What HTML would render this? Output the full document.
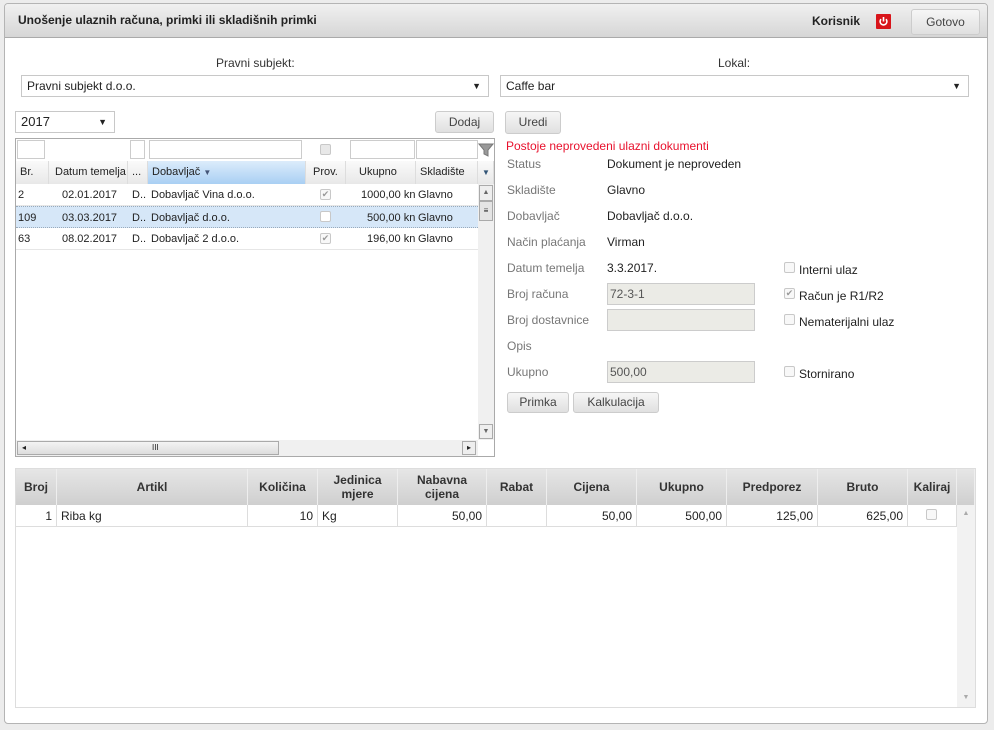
<!DOCTYPE html>
<html><head><meta charset="utf-8">
<style>
*{box-sizing:border-box;margin:0;padding:0}
body{width:994px;height:730px;background:#ececec;font-family:"Liberation Sans",Arial,sans-serif;font-size:12px;color:#222;position:relative;overflow:hidden}
.a{position:absolute}
.panel{left:4px;top:3px;width:984px;height:721px;background:#fff;border:1px solid #b4b4b4;border-radius:4px}
.hdr{left:5px;top:4px;width:982px;height:34px;background:linear-gradient(#f0f0f0,#d6d6d6);border-bottom:1px solid #aaa;border-radius:3px 3px 0 0}
.btn{position:absolute;background:linear-gradient(#f6f6f6,#e0e0e0);border:1px solid #ccc;border-radius:3px;text-align:center;color:#444;font-size:12px}
.sel{position:absolute;border:1px solid #c8c8c8;background:#fff;font-size:12px;padding-left:5px;line-height:20px}
.sel:after{content:"▼";position:absolute;right:7px;top:0;font-size:9px}
.lbl{position:absolute;color:#777;font-size:12px}
.val{position:absolute;color:#222;font-size:12px}
.inp{position:absolute;background:#ebebe6;border:1px solid #ccc;height:22px;width:148px;left:607px;color:#555;padding-left:2px;line-height:20px}
.cb{position:absolute;width:11px;height:11px;border:1px solid #c8c8c8;border-radius:2px;background:#f8f8f8;color:#999;font-size:9px;line-height:9px;text-align:center}
.gh{position:absolute;top:161px;height:23px;line-height:23px;background:linear-gradient(#fafafa,#e8e8e8);border-right:1px solid #ddd;font-size:11px;color:#222;padding-left:4px}
.fi{position:absolute;top:140px;height:19px;border:1px solid #ccc;background:#fff}
.row{position:absolute;left:16px;width:462px;height:22px;border-bottom:1px solid #e6e6e6;font-size:11px;line-height:22px}
.row span{position:absolute}
.bh{position:absolute;top:469px;height:36px;background:linear-gradient(#e6e6e6,#cfcfcf);border-right:1px solid #eee;font-weight:bold;font-size:12px;color:#333;text-align:center;display:flex;align-items:center;justify-content:center;line-height:14px}
.bc{position:absolute;top:505px;height:22px;border-right:1px solid #ddd;border-bottom:1px solid #ddd;line-height:22px;font-size:12px;padding:0 4px}
</style></head><body>
<div class="a panel"></div>
<div class="a hdr"></div>
<div class="a" style="left:18px;top:13px;font-weight:bold;font-size:12px;color:#222">Unošenje ulaznih računa, primki ili skladišnih primki</div>
<div class="a" style="left:812px;top:14px;font-weight:bold;font-size:12px">Korisnik</div>
<div class="a" style="left:876px;top:14px;width:15px;height:15px;background:#d8141a;border-radius:1px">
<svg width="15" height="15" viewBox="0 0 15 15"><path d="M5 5.2A3.4 3.4 0 1 0 10 5.2" fill="none" stroke="#fff" stroke-width="1.6"/><path d="M7.5 3v4.5" stroke="#fff" stroke-width="1.6"/></svg></div>
<div class="btn" style="left:911px;top:9px;width:69px;height:26px;line-height:24px;font-size:12px">Gotovo</div>

<div class="a" style="left:216px;top:56px;font-size:12px;color:#333">Pravni subjekt:</div>
<div class="sel" style="left:21px;top:75px;width:468px;height:22px">Pravni subjekt d.o.o.</div>
<div class="a" style="left:718px;top:56px;font-size:12px;color:#333">Lokal:</div>
<div class="sel" style="left:500px;top:75px;width:469px;height:22px">Caffe bar</div>

<div class="sel" style="left:15px;top:111px;width:100px;height:22px;font-size:13px">2017</div>
<div class="btn" style="left:435px;top:111px;width:59px;height:22px;line-height:20px">Dodaj</div>
<div class="btn" style="left:505px;top:111px;width:56px;height:23px;line-height:21px">Uredi</div>

<div class="a" style="left:15px;top:138px;width:480px;height:319px;border:1px solid #aaa;background:#fff"></div>
<div class="fi" style="left:17px;width:28px"></div>
<div class="fi" style="left:130px;width:15px"></div>
<div class="fi" style="left:149px;width:153px"></div>
<div class="cb" style="left:320px;top:144px;background:#e8e8e8"></div>
<div class="fi" style="left:350px;width:65px"></div>
<div class="fi" style="left:416px;width:62px"></div>
<svg class="a" style="left:478px;top:142px" width="16" height="16" viewBox="0 0 16 16"><path d="M1 2h14l-5 6v6l-4-2V8z" fill="#999" stroke="#777"/></svg>
<div class="gh" style="left:16px;width:33px">Br.</div>
<div class="gh" style="left:49px;width:79px;padding-left:6px">Datum temelja</div>
<div class="gh" style="left:128px;width:20px">...</div>
<div class="gh" style="left:148px;width:158px;background:linear-gradient(#dcecfb,#a9cff3)">Dobavljač <span style="font-size:8px;color:#457">▼</span></div>
<div class="gh" style="left:306px;width:40px;padding-left:7px">Prov.</div>
<div class="gh" style="left:346px;width:70px;padding-left:13px">Ukupno</div>
<div class="gh" style="left:416px;width:62px">Skladište</div>
<div class="gh" style="left:478px;width:16px;font-size:8px;color:#357;padding-left:4px">▼</div>

<div class="row" style="top:184px"><span style="left:2px">2</span><span style="left:46px">02.01.2017</span><span style="left:116px">D..</span><span style="left:135px">Dobavljač Vina d.o.o.</span><span style="left:304px;top:5px" class="cb">✔</span><span style="left:345px">1000,00 kn</span><span style="left:402px">Glavno</span></div>
<div class="row" style="top:206px;background:#d6e7f8;border-top:1px dotted #9ab;border-bottom:1px dotted #9ab"><span style="left:2px">109</span><span style="left:46px">03.03.2017</span><span style="left:116px">D..</span><span style="left:135px">Dobavljač d.o.o.</span><span style="left:304px;top:4px;background:#fff" class="cb"></span><span style="left:351px">500,00 kn</span><span style="left:402px">Glavno</span></div>
<div class="row" style="top:228px"><span style="left:2px">63</span><span style="left:46px">08.02.2017</span><span style="left:116px">D..</span><span style="left:135px">Dobavljač 2 d.o.o.</span><span style="left:304px;top:5px" class="cb">✔</span><span style="left:351px">196,00 kn</span><span style="left:402px">Glavno</span></div>
<div class="a" style="left:478px;top:184px;width:16px;height:256px;background:#f0f0f0"></div>
<div class="a" style="left:479px;top:185px;width:14px;height:16px;border:1px solid #aaa;background:#eee;font-size:7px;text-align:center;line-height:14px;color:#666">▲</div>
<div class="a" style="left:479px;top:201px;width:14px;height:20px;border:1px solid #aaa;background:#e4e4e4;font-size:8px;text-align:center;line-height:18px">≡</div>
<div class="a" style="left:479px;top:424px;width:14px;height:15px;border:1px solid #aaa;background:#eee;font-size:7px;text-align:center;line-height:13px;color:#666">▼</div>
<div class="a" style="left:16px;top:440px;width:462px;height:16px;background:#f0f0f0"></div>
<div class="a" style="left:17px;top:441px;width:262px;height:14px;border:1px solid #aaa;background:linear-gradient(#f4f4f4,#ddd);font-size:8px;line-height:12px;padding-left:4px">◂<span style="position:absolute;left:134px">III</span></div>
<div class="a" style="left:462px;top:441px;width:14px;height:14px;border:1px solid #aaa;background:#eee;font-size:8px;line-height:12px;text-align:center">▸</div>

<div class="a" style="left:506px;top:139px;color:#e8112d;font-size:12px">Postoje neprovedeni ulazni dokumenti</div>
<div class="lbl" style="left:507px;top:157px">Status</div><div class="val" style="left:607px;top:157px">Dokument je neproveden</div>
<div class="lbl" style="left:507px;top:183px">Skladište</div><div class="val" style="left:607px;top:183px">Glavno</div>
<div class="lbl" style="left:507px;top:209px">Dobavljač</div><div class="val" style="left:607px;top:209px">Dobavljač d.o.o.</div>
<div class="lbl" style="left:507px;top:235px">Način plaćanja</div><div class="val" style="left:607px;top:235px">Virman</div>
<div class="lbl" style="left:507px;top:261px">Datum temelja</div><div class="val" style="left:607px;top:261px">3.3.2017.</div>
<div class="lbl" style="left:507px;top:287px">Broj računa</div><div class="inp" style="top:283px">72-3-1</div>
<div class="lbl" style="left:507px;top:313px">Broj dostavnice</div><div class="inp" style="top:309px"></div>
<div class="lbl" style="left:507px;top:339px">Opis</div>
<div class="lbl" style="left:507px;top:365px">Ukupno</div><div class="inp" style="top:361px">500,00</div>
<div class="cb" style="left:784px;top:262px"></div><div class="val" style="left:799px;top:263px">Interni ulaz</div>
<div class="cb" style="left:784px;top:288px">✔</div><div class="val" style="left:799px;top:289px">Račun je R1/R2</div>
<div class="cb" style="left:784px;top:314px"></div><div class="val" style="left:799px;top:315px">Nematerijalni ulaz</div>
<div class="cb" style="left:784px;top:366px"></div><div class="val" style="left:799px;top:367px">Stornirano</div>
<div class="btn" style="left:507px;top:392px;width:62px;height:21px;line-height:19px">Primka</div>
<div class="btn" style="left:573px;top:392px;width:86px;height:21px;line-height:19px">Kalkulacija</div>

<div class="a" style="left:15px;top:468px;width:961px;height:240px;border:1px solid #ddd;background:#fff"></div>
<div class="bh" style="left:16px;width:41px">Broj</div>
<div class="bh" style="left:57px;width:191px">Artikl</div>
<div class="bh" style="left:248px;width:70px">Količina</div>
<div class="bh" style="left:318px;width:80px">Jedinica<br>mjere</div>
<div class="bh" style="left:398px;width:89px">Nabavna<br>cijena</div>
<div class="bh" style="left:487px;width:60px">Rabat</div>
<div class="bh" style="left:547px;width:90px">Cijena</div>
<div class="bh" style="left:637px;width:90px">Ukupno</div>
<div class="bh" style="left:727px;width:91px">Predporez</div>
<div class="bh" style="left:818px;width:90px">Bruto</div>
<div class="bh" style="left:908px;width:49px">Kaliraj</div>
<div class="bh" style="left:957px;width:18px"></div>
<div class="bc" style="left:16px;width:41px;text-align:right">1</div>
<div class="bc" style="left:57px;width:191px">Riba kg</div>
<div class="bc" style="left:248px;width:70px;text-align:right">10</div>
<div class="bc" style="left:318px;width:80px">Kg</div>
<div class="bc" style="left:398px;width:89px;text-align:right">50,00</div>
<div class="bc" style="left:487px;width:60px"></div>
<div class="bc" style="left:547px;width:90px;text-align:right">50,00</div>
<div class="bc" style="left:637px;width:90px;text-align:right">500,00</div>
<div class="bc" style="left:727px;width:91px;text-align:right">125,00</div>
<div class="bc" style="left:818px;width:90px;text-align:right">625,00</div>
<div class="bc" style="left:908px;width:49px"></div>
<div class="cb" style="left:926px;top:509px"></div>
<div class="a" style="left:957px;top:505px;width:18px;height:202px;background:#f2f2f2;color:#aaa;font-size:7px;text-align:center"><div style="margin-top:5px">▲</div><div style="position:absolute;bottom:6px;width:18px">▼</div></div>
</body></html>
